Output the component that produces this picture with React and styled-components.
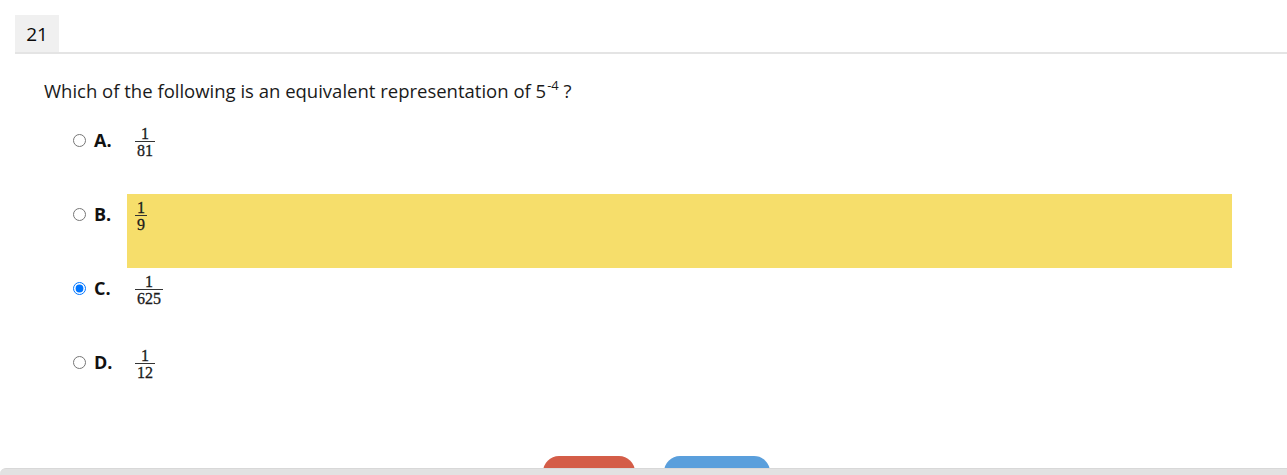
import React from "react";
import styled, { createGlobalStyle } from "styled-components";

const Global = createGlobalStyle`
  html, body { margin: 0; padding: 0; background: #fff; }
  body { font-family: "Open Sans", "Liberation Sans", sans-serif; color: #222; overflow: hidden; }
`;

const Page = styled.div`
  padding: 15px 0 0 15px;
`;

const Header = styled.div`
  display: flex;
  border-bottom: 2px solid #e4e4e4;
`;

const Number = styled.div`
  background: #f0f0f0;
  height: 37px;
  width: 44px;
  display: flex;
  align-items: center;
  justify-content: center;
  font-size: 19px;
  color: #0a0a0a;
`;

const Body = styled.div`
  padding: 24px 55px 0 29px;
`;

const Question = styled.p`
  margin: 0 0 14px 0;
  font-size: 18.5px;
  line-height: 26px;
  color: #1a1a1a;
  sup { font-size: 13px; vertical-align: 0; position: relative; top: -8px; margin-left: 1px; }
`;

const Options = styled.div`
  display: flex;
  flex-direction: column;
`;

const Row = styled.div`
  display: flex;
  align-items: flex-start;
  height: 74px;
`;

const Choice = styled.label`
  display: flex;
  align-items: center;
  width: 83px;
  padding: 0 0 0 29px;
  box-sizing: border-box;
  height: 28px;
  margin-top: 6px;
`;

const Radio = styled.input`
  margin: 0 8px 0 0;
  width: 13px;
  height: 13px;
`;

const Letter = styled.span`
  font-family: "Open Sans", "Liberation Sans", sans-serif;
  font-weight: 700;
  font-size: 18px;
  color: #111;
`;

const Answer = styled.div`
  flex: 1;
  display: flex;
  align-items: flex-start;
  height: 74px;
  background: ${(p) => (p.$hl ? "#f6de6b" : "transparent")};
  padding: 7px 0 0 8px;
  box-sizing: border-box;
`;

const Frac = styled.span`
  display: flex;
  flex-direction: column;
  align-items: center;
  font-family: "Liberation Serif", "DejaVu Serif", serif;
  font-size: 16px;
  line-height: 13px;
  color: #1a1a1a;
  -webkit-text-stroke: 0.3px #1a1a1a;
`;

const Num = styled.span`
  padding: 0 2px 1px;
`;

const Den = styled.span`
  padding: 2px 2px 0;
  border-top: 1px solid #333;
  align-self: stretch;
  text-align: center;
`;

const Buttons = styled.div`
  display: flex;
  justify-content: center;
  gap: 29px;
  margin-top: 40px;
  padding-left: 37px;
`;

const Btn = styled.button`
  border: none;
  border-radius: 16px;
  height: 38px;
  width: ${(p) => p.$w}px;
  background: ${(p) => p.$bg};
  color: #fff;
  font-family: "Open Sans", sans-serif;
  font-size: 16px;
  font-weight: 600;
`;

const Footer = styled.div`
  position: fixed;
  left: 0;
  right: 0;
  bottom: 0;
  height: 6px;
  background: #e2e2e2;
  border-top: 1px solid #d8d8d8;
  border-top-left-radius: 6px;
`;

const options = [
  { l: "A.", n: "1", d: "81" },
  { l: "B.", n: "1", d: "9", hl: true },
  { l: "C.", n: "1", d: "625", checked: true },
  { l: "D.", n: "1", d: "12" },
];

export default function App() {
  return (
    <>
      <Global />
      <Page>
        <Header>
          <Number>21</Number>
        </Header>
        <Body>
          <Question>
            Which of the following is an equivalent representation of 5<sup>-4</sup> ?
          </Question>
          <Options>
            {options.map((o) => (
              <Row key={o.l}>
                <Choice>
                  <Radio type="radio" name="q" defaultChecked={!!o.checked} />
                  <Letter>{o.l}</Letter>
                </Choice>
                <Answer $hl={o.hl}>
                  <Frac>
                    <Num>{o.n}</Num>
                    <Den>{o.d}</Den>
                  </Frac>
                </Answer>
              </Row>
            ))}
          </Options>
          <Buttons>
            <Btn $w={92} $bg="#d45d48">Reset</Btn>
            <Btn $w={106} $bg="#5a9fdc">Submit</Btn>
          </Buttons>
        </Body>
      </Page>
      <Footer />
    </>
  );
}
